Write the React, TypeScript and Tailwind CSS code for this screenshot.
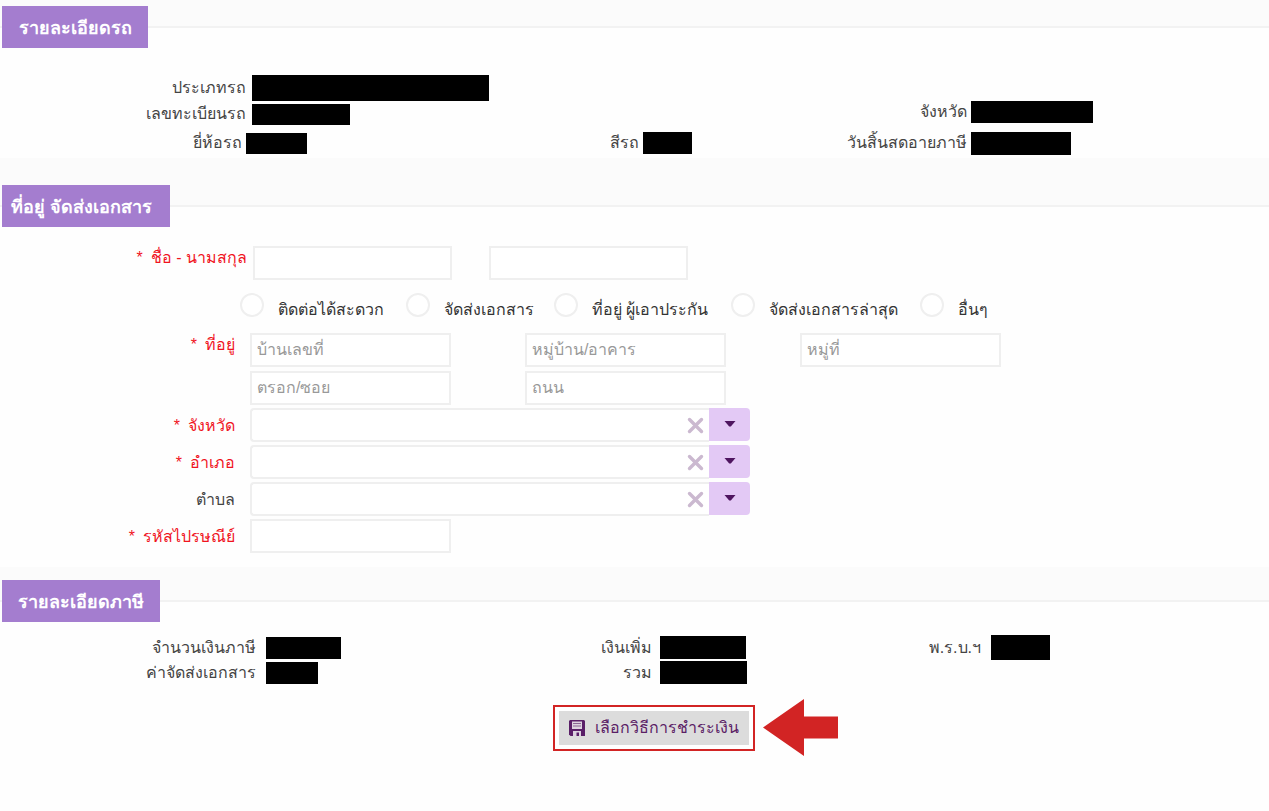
import clsx from "clsx";
import type { ReactNode } from "react";

const inputStyle =
  "h-[34px] border-2 border-[#efefef] bg-white px-[5px] text-[#333] placeholder:text-[#999] outline-none";

function SectionHeader({ title, band, tab }: { title: string; band: string; tab: string }) {
  return (
    <header className="flex flex-col items-start">
      <div className={clsx("w-full border-b-2 border-[#f2f2f2] bg-[#fbfbfb]", band)}></div>
      <h2
        className={clsx(
          "relative -mt-[22px] ml-[2px] flex h-[42px] items-center justify-center bg-[#a47dcf] pt-[2px] text-lg font-bold whitespace-nowrap text-white",
          tab
        )}
      >
        {title}
      </h2>
    </header>
  );
}

function Detail({ label, bar, size, className }: { label: string; bar: string; size: string; className?: string }) {
  return (
    <div className={clsx("flex items-center", className)}>
      <dt className={clsx("shrink-0 text-right whitespace-nowrap", size)}>{label}</dt>
      <dd className={clsx("shrink-0 bg-black", bar)}></dd>
    </div>
  );
}

function FieldRow({
  label,
  htmlFor,
  required,
  size = "w-[235px] pt-[6px]",
  children,
}: {
  label?: string;
  htmlFor?: string;
  required?: boolean;
  size?: string;
  children: ReactNode;
}) {
  return (
    <div className="flex">
      <label htmlFor={htmlFor} className={clsx("shrink-0 text-right", size, required && "text-[#f0141e]")}>
        {required && <span className="mr-2">*</span>}
        {label}
      </label>
      {children}
    </div>
  );
}

function Combo({ id }: { id: string }) {
  return (
    <div className="ml-[15px] flex w-[500px]">
      <div className="relative flex-1">
        <select
          id={id}
          className="block h-[34px] w-full appearance-none rounded-l border-2 border-r-0 border-[#efefef] bg-white px-2 outline-none"
        ></select>
        <button type="button" aria-label="ล้าง" className="absolute top-[9px] right-[5px]">
          <svg width="17" height="17" viewBox="0 0 17 17" stroke="#cbb9d0" strokeWidth="3.4" strokeLinecap="round">
            <path d="M2.5 2.5l12 12M14.5 2.5l-12 12" />
          </svg>
        </button>
      </div>
      <button
        type="button"
        aria-label="เลือก"
        className="flex h-[33px] w-[41px] items-center justify-center rounded-r bg-[#e3c9f5]"
      >
        <svg width="12" height="8" viewBox="0 0 12 8" fill="#4f1560">
          <path d="M0.5 0h11L6.8 5.6H5.2z" />
        </svg>
      </button>
    </div>
  );
}

const contacts = [
  { id: "convenient", label: "ติดต่อได้สะดวก", width: "w-[166px]" },
  { id: "delivery", label: "จัดส่งเอกสาร", width: "w-[148px]" },
  { id: "insured", label: "ที่อยู่ ผู้เอาประกัน", width: "w-[177px]" },
  { id: "latest", label: "จัดส่งเอกสารล่าสุด", width: "w-[189px]" },
  { id: "other", label: "อื่นๆ", width: "w-[80px]" },
];

export default function App() {
  return (
    <main className="min-h-screen bg-[#fefefe] pb-10 font-['Liberation_Sans',sans-serif] text-base leading-6 text-[#444]">
      <section>
        <SectionHeader title="รายละเอียดรถ" band="h-[28px]" tab="w-[146px]" />
        <dl className="grid grid-cols-[393fr_328fr_548fr] pt-[27px] pb-[3px]">
          <Detail label="ประเภทรถ" size="w-[246px]" bar="ml-[6px] h-[26px] w-[237px]" className="col-span-3" />
          <Detail label="เลขทะเบียนรถ" size="w-[246px]" bar="ml-[6px] h-[21px] w-[98px]" className="h-[26px]" />
          <Detail
            label="จังหวัด"
            size="w-[246px]"
            bar="ml-1 h-[22px] w-[122px]"
            className="col-start-3 h-[22px] self-start"
          />
          <Detail label="ยี่ห้อรถ" size="w-[242px]" bar="ml-1 h-[21px] w-[61px]" className="h-7 pt-1" />
          <Detail label="สีรถ" size="w-[246px]" bar="ml-1 h-[22px] w-[49px]" className="pt-1" />
          <Detail label="วันสิ้นสดอายภาษี" size="w-[246px]" bar="ml-1 h-[23px] w-[100px]" className="pt-1" />
        </dl>
      </section>

      <section>
        <SectionHeader title="ที่อยู่ จัดส่งเอกสาร" band="h-[49px]" tab="w-[168px] pr-2" />
        <form className="pt-[19px] pb-[14px]">
          <FieldRow label="ชื่อ - นามสกุล" htmlFor="firstName" required size="w-[247px]">
            <input id="firstName" className={clsx(inputStyle, "ml-[6px] w-[199px]")} />
            <input aria-label="นามสกุล" className={clsx(inputStyle, "ml-[37px] w-[199px]")} />
          </FieldRow>

          <div className="mt-[13px] mb-2 flex pl-[240px]">
            {contacts.map((contact) => (
              <div key={contact.id} className={clsx("flex h-8 shrink-0 gap-[14px] whitespace-nowrap", contact.width)}>
                <input
                  id={contact.id}
                  type="radio"
                  name="contact"
                  className="size-6 shrink-0 appearance-none rounded-full border-2 border-[#efefef] bg-white"
                />
                <label htmlFor={contact.id} className="leading-[34px] text-[#333]">
                  {contact.label}
                </label>
              </div>
            ))}
          </div>

          <div className="flex flex-col gap-[3px]">
            <FieldRow label="ที่อยู่" htmlFor="houseNo" required size="w-[235px]">
              <div className="ml-[15px] grid grid-cols-[201px_201px_201px] gap-x-[74px] gap-y-[4px]">
                <input id="houseNo" placeholder="บ้านเลขที่" className={inputStyle} />
                <input placeholder="หมู่บ้าน/อาคาร" aria-label="หมู่บ้าน/อาคาร" className={inputStyle} />
                <input placeholder="หมู่ที่" aria-label="หมู่ที่" className={inputStyle} />
                <input placeholder="ตรอก/ซอย" aria-label="ตรอก/ซอย" className={inputStyle} />
                <input placeholder="ถนน" aria-label="ถนน" className={inputStyle} />
              </div>
            </FieldRow>
            <FieldRow label="จังหวัด" htmlFor="province" required>
              <Combo id="province" />
            </FieldRow>
            <FieldRow label="อำเภอ" htmlFor="district" required>
              <Combo id="district" />
            </FieldRow>
            <FieldRow label="ตำบล" htmlFor="subdistrict">
              <Combo id="subdistrict" />
            </FieldRow>
            <FieldRow label="รหัสไปรษณีย์" htmlFor="zipcode" required>
              <input id="zipcode" className={clsx(inputStyle, "ml-[15px] w-[201px]")} />
            </FieldRow>
          </div>
        </form>
      </section>

      <section>
        <SectionHeader title="รายละเอียดภาษี" band="h-[35px]" tab="w-[158px]" />
        <dl className="grid auto-rows-[25px] grid-cols-[minmax(0,396fr)_minmax(0,329fr)_minmax(0,544fr)] pt-[13px]">
          <Detail label="จำนวนเงินภาษี" size="w-[256px]" bar="ml-[10px] h-[22px] w-[75px]" />
          <Detail label="เงินเพิ่ม" size="w-[256px]" bar="ml-2 h-[23px] w-[86px]" />
          <Detail label="พ.ร.บ.ฯ" size="w-[256px]" bar="ml-[10px] h-[25px] w-[59px]" />
          <Detail label="ค่าจัดส่งเอกสาร" size="w-[256px]" bar="ml-[10px] h-[22px] w-[52px]" />
          <Detail label="รวม" size="w-[256px]" bar="ml-2 h-[23px] w-[87px]" />
        </dl>
        <div className="flex items-center justify-center gap-2 pt-[14px] pl-[122px]">
          <div className="border-2 border-[#d22424] bg-white p-1">
            <button
              type="button"
              className="flex h-[34px] w-[190px] items-center justify-center gap-[10px] bg-[#dcdcdc] whitespace-nowrap text-[#5a2065]"
            >
              <svg width="16" height="16" viewBox="0 0 16 16" className="shrink-0">
                <path fill="#5a1f68" d="M1 0h14l1 1v15H1.5L0 14.5V1z" />
                <path fill="#dcd3df" d="M3 1.5h10v7.500H3zM4 11h8v5h-2v-3.500H7.500V16H4z" />
                <path fill="#8a6593" d="M4 3h8v1H4zM4 5.500h8v1H4z" />
              </svg>
              เลือกวิธีการชำระเงิน
            </button>
          </div>
          <svg width="75" height="57" viewBox="0 0 75 57" fill="#d22424">
            <path d="M0 28.5L41 0v17.500h34v22H41V57z" />
          </svg>
        </div>
      </section>
    </main>
  );
}
